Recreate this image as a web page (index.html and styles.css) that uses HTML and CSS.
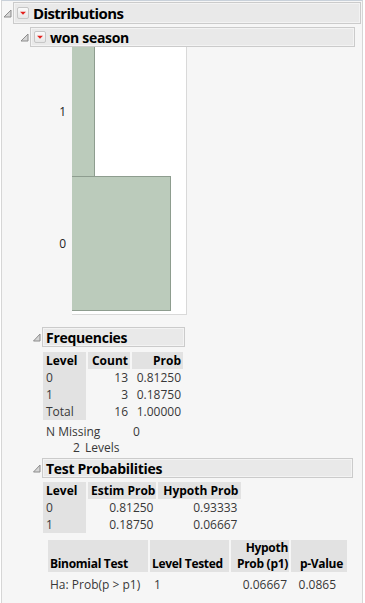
FILE: index.html
```html
<!DOCTYPE html>
<html lang="en">
<head>
    <meta charset="UTF-8">
    <meta name="viewport" content="width=device-width, initial-scale=1.0">
    <title>Distributions</title>
    <link rel="stylesheet" href="styles.css">
</head>
<body>
    <div class="report">
        <!-- Distributions -->
        <div class="outline-head top">
            <svg class="disclose" width="11" height="11" viewBox="0 0 11 11"><polygon points="9,2 9,9 2,9" fill="#d6d6d6" stroke="#8c8c8c" stroke-width="1"/></svg>
            <div class="title-box big">
                <span class="menu-btn"><svg width="12" height="12" viewBox="0 0 12 12"><polygon points="2.5,4.5 9.5,4.5 6,8" fill="#e3201c"/></svg></span>
                <span class="title">Distributions</span>
            </div>
        </div>

        <div class="dist-body">
            <!-- won season -->
            <div class="outline-head var">
                <svg class="disclose" width="10" height="11" viewBox="0 0 10 11"><polygon points="8,2 8,9 1,9" fill="#d6d6d6" stroke="#8c8c8c" stroke-width="1"/></svg>
                <div class="title-box">
                    <span class="menu-btn"><svg width="12" height="12" viewBox="0 0 12 12"><polygon points="2.5,4.5 9.5,4.5 6,8" fill="#e3201c"/></svg></span>
                    <span class="title">won season</span>
                </div>
            </div>

            <div class="var-body">
                <div class="chart">
                    <div class="axis">
                        <span style="height: 129px">1</span>
                        <span style="height: 135px">0</span>
                    </div>
                    <div class="plot">
                        <div class="bar first" style="width: 23px; height: 129px"></div>
                        <div class="bar" style="width: 99px; height: 135px"></div>
                    </div>
                </div>

                <!-- Frequencies -->
                <div class="outline-head sub freq-head">
                    <svg class="disclose" width="9" height="11" viewBox="0 0 9 11"><polygon points="7,2 7,9 0.5,9" fill="#d6d6d6" stroke="#8c8c8c" stroke-width="1"/></svg>
                    <div class="title-box freq-box">
                        <span class="title">Frequencies</span>
                    </div>
                </div>
                <div class="sub-body">
                    <table class="grid freq">
                        <tr><th class="lvl">Level</th><th class="num c-count">Count</th><th class="num c-prob">Prob</th></tr>
                        <tr><td class="lvl">0</td><td class="num">13</td><td class="num">0.81250</td></tr>
                        <tr><td class="lvl">1</td><td class="num">3</td><td class="num">0.18750</td></tr>
                        <tr><td class="lvl">Total</td><td class="num">16</td><td class="num">1.00000</td></tr>
                    </table>
                    <div class="missing">
                        <div class="kv"><span class="k">N Missing</span><span class="v">0</span></div>
                        <div class="levels"><span class="n">2</span><span>Levels</span></div>
                    </div>
                </div>

                <!-- Test Probabilities -->
                <div class="outline-head sub">
                    <svg class="disclose" width="9" height="11" viewBox="0 0 9 11"><polygon points="7,2 7,9 0.5,9" fill="#d6d6d6" stroke="#8c8c8c" stroke-width="1"/></svg>
                    <div class="title-box test-box">
                        <span class="title">Test Probabilities</span>
                    </div>
                </div>
                <div class="sub-body">
                    <table class="grid probs">
                        <tr><th class="lvl">Level</th><th class="num c-estim">Estim Prob</th><th class="num c-hyp">Hypoth Prob</th></tr>
                        <tr><td class="lvl">0</td><td class="num">0.81250</td><td class="num">0.93333</td></tr>
                        <tr><td class="lvl">1</td><td class="num">0.18750</td><td class="num">0.06667</td></tr>
                    </table>

                    <table class="grid binom">
                        <tr>
                            <th class="c-test">Binomial Test</th>
                            <th class="c-lt">Level Tested</th>
                            <th class="num c-hp">Hypoth<br>Prob (p1)</th>
                            <th class="num c-pv">p-Value</th>
                        </tr>
                        <tr>
                            <td>Ha: Prob(p &gt; p1)</td>
                            <td class="lt">1</td>
                            <td class="num hp">0.06667</td>
                            <td class="num pv">0.0865</td>
                        </tr>
                    </table>
                </div>
            </div>
        </div>
    </div>
</body>
</html>
```

FILE: styles.css
```css
* {
    margin: 0;
    padding: 0;
    box-sizing: border-box;
}

body {
    font-family: 'Open Sans', 'Noto Sans', sans-serif;
    font-size: 12px;
    color: #383838;
    background: #ffffff;
    width: 365px;
    height: 603px;
    overflow: hidden;
}

.report {
    margin-left: 1px;
    width: 362px;
    height: 603px;
    padding-top: 1px;
    background: #f6f6f6;
    border-top: 1px solid #c9d1da;
    border-left: 1px solid #d6d6d6;
    border-right: 1px solid #d6d6d6;
}

/* outline headers */
.outline-head {
    display: flex;
    align-items: center;
}

.disclose {
    flex: none;
}

.title-box {
    flex: 1;
    display: flex;
    align-items: center;
    height: 20px;
    padding-left: 3px;
    background: #e9e9e9;
    border: 1px solid #cbcbcb;
    box-shadow: inset 0 0 0 1px #f3f3f3;
}

.title {
    font-weight: bold;
    font-size: 14px;
    color: #000;
    letter-spacing: -0.3px;
}

.title-box.big {
    height: 22px;
}

.title-box.big .title {
    font-size: 15px;
    letter-spacing: -0.6px;
}

.menu-btn {
    display: flex;
    width: 12px;
    height: 12px;
    margin-right: 4px;
    border: 1px solid #c6c6c6;
    border-radius: 2px;
    background: linear-gradient(#fafafa, #e6e6e6);
    align-items: center;
    justify-content: center;
}

.top {
    margin-right: 1px;
}

.dist-body {
    padding-left: 18px;
    padding-top: 3px;
}

.var {
    margin-right: 7px;
}

.var-body {
    padding-left: 13px;
}

/* bar chart */
.chart {
    display: flex;
}

.axis {
    width: 39px;
    display: flex;
    flex-direction: column;
    padding-right: 6px;
}

.axis span {
    display: flex;
    align-items: center;
    justify-content: flex-end;
    color: #222;
}

.plot {
    width: 115px;
    height: 268px;
    background: #ffffff;
    border-right: 1px solid #d9d9d9;
    border-bottom: 1px solid #d9d9d9;
}

.bar {
    background: #bbcbbb;
    border: 1px solid #8e9d8f;
    border-left: none;
}

.bar.first {
    border-top: none;
    border-bottom: none;
}

/* sub outlines */
.sub {
    margin-top: 3px;
}

.freq-head {
    margin-top: 12px;
}

.freq-box {
    flex: none;
    width: 143px;
}

.test-box {
    flex: none;
    width: 311px;
}

.sub-body {
    padding-left: 10px;
}

/* tables */
.grid {
    border-collapse: separate;
    border-spacing: 2px 0;
    margin-left: -2px;
}

.grid th {
    font-weight: bold;
    color: #000;
    background: #e2e2e2;
    height: 17px;
    padding: 0 2px 0 3px;
    text-align: left;
    white-space: nowrap;
    line-height: 17px;
}

.grid td {
    height: 17px;
    padding: 1px 2px 0 3px;
    white-space: nowrap;
    line-height: 16px;
}

.grid .num {
    text-align: right;
}

.grid td.lvl {
    background: #e2e2e2;
}

.freq {
    margin-top: 5px;
}

.freq .lvl {
    width: 43px;
}

.freq .c-count {
    width: 42px;
}

.freq .c-prob {
    width: 51px;
}

.missing {
    padding-left: 3px;
    padding-top: 3px;
}

.kv,
.levels {
    display: flex;
    height: 16px;
    align-items: center;
}

.kv .k {
    width: 87px;
}

.levels {
    padding-left: 27px;
}

.levels .n {
    width: 12px;
}

.probs {
    margin-top: 4px;
}

.probs th {
    padding: 0 1px 0 3px;
}

.probs .lvl {
    width: 43px;
}

.probs .c-estim {
    width: 67px;
}

.probs td.num:nth-child(2) {
    padding-right: 3px;
}

.probs .c-hyp {
    width: 83px;
    padding-right: 3px;
}

.probs td.num:nth-child(3) {
    padding-right: 4px;
}

.binom {
    margin-top: 7px;
    margin-left: 3px;
}

.binom th {
    vertical-align: bottom;
    line-height: 16px;
    height: 31px;
    padding: 0 1px 0 2px;
    letter-spacing: -0.3px;
}

.binom .c-test {
    width: 100px;
}

.binom .c-lt {
    width: 79px;
}

.binom .c-hp {
    width: 58px;
}

.binom .c-pv {
    width: 56px;
    padding-right: 4px;
}

.binom td {
    height: 26px;
    padding: 0 1px 0 2px;
}

.binom .lt {
    padding-left: 4px;
}

.binom .hp {
    padding-right: 2px;
}

.binom .pv {
    padding-right: 11px;
}
```
